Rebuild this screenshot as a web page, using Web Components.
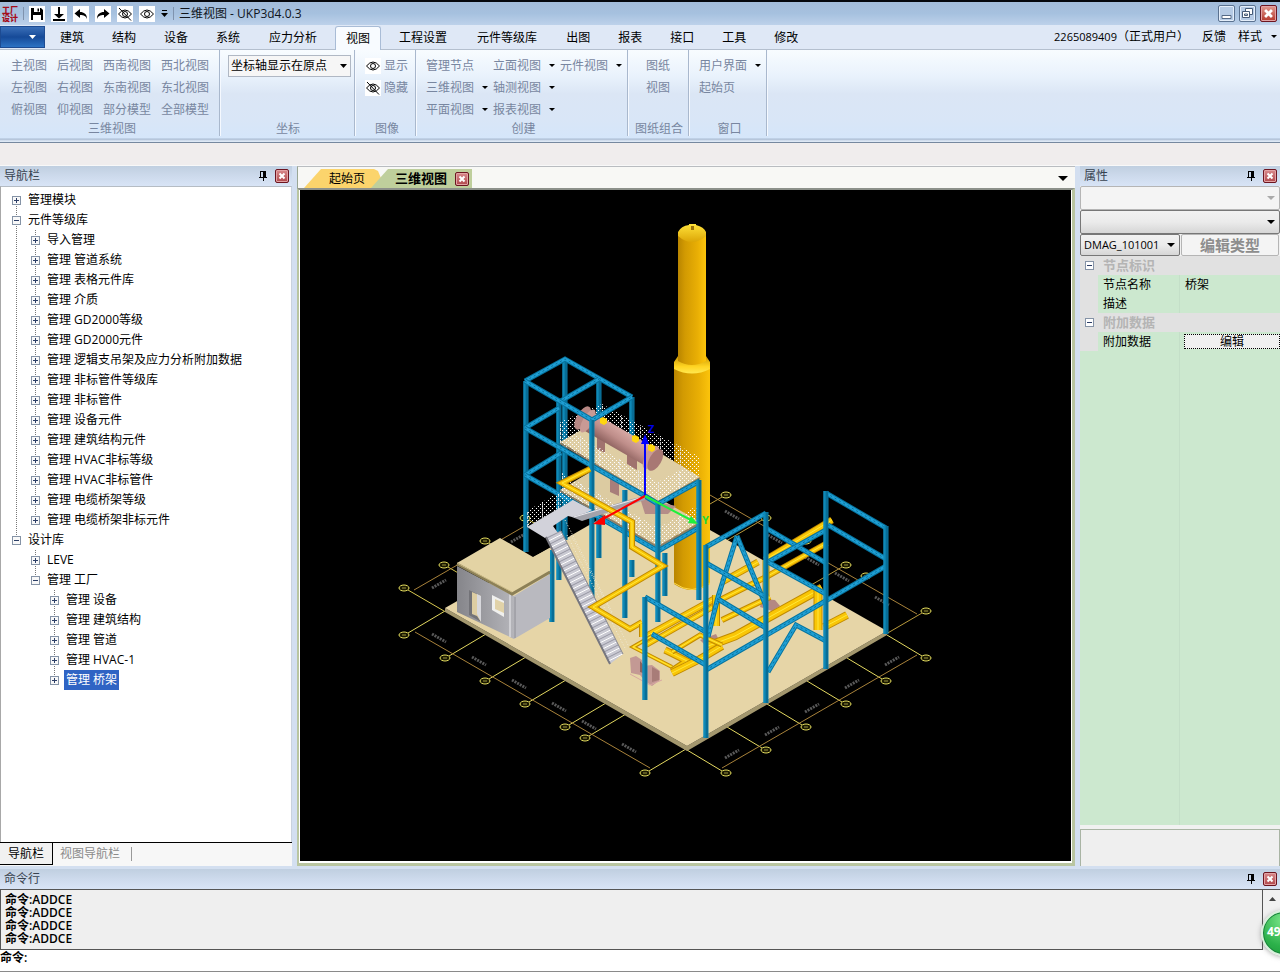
<!DOCTYPE html>
<html lang="zh-CN">
<head>
<meta charset="utf-8">
<title>三维视图 - UKP3d4.0.3</title>
<style>
  body {
    margin: 0;
    font: 12px/20px "Open Sans", "Noto Sans CJK SC", sans-serif;
    color: #000;
    background: #d3dff0;
  }
</style>
</head>
<body>
<plant-app></plant-app>

<script>
const base = `
  * { box-sizing: border-box; }
  button, select, input { font: inherit; color: inherit; margin: 0; padding: 0; border: 0; background: none; border-radius: 0; }
  button { white-space: nowrap; text-align: left; }
  select { appearance: none; }
  svg { display: block; }
`;

const arrow = (color = '#000') =>
  `url('data:image/svg+xml,<svg xmlns="http://www.w3.org/2000/svg" width="8" height="4"><path d="M0 0h8L4 4z" fill="${color.replace('#', '%23')}"/></svg>')`;

const icons = {
  save: '<path d="M2 2h10l2 2v10H2z"/><path d="M5 2h6v4H5zM4 9h8v5H4z" fill="#fff"/><path d="M8.500 2.500h1.500v3H8.500z"/>',
  down: '<path d="M7 1h2v7h4l-5 4.500L3 8h4zM2 13h12v2H2z"/>',
  undo: '<path d="M7 3v3c4 0 7 2 7 7-1-3-3-4-7-4v3L1.500 7.500z"/>',
  redo: '<path d="M9 3v3c-4 0-7 2-7 7 1-3 3-4 7-4v3l5.500-4.500z"/>',
  eye: '<g fill="none" stroke="#000"><path d="M1.500 8Q8 0 14.500 8 8 16 1.500 8z"/><circle cx="8" cy="8" r="2.500"/></g>',
  hide: '<g fill="none" stroke="#000"><path d="M1.500 8Q8 0 14.500 8 8 16 1.500 8z"/><circle cx="8" cy="8" r="2.500"/><path d="M2 2l12 12.500"/></g>',
  pin: '<path d="M5 3h6v6h1v1H9v3H8v-3H4V9h1zM6 4v5h2V4z" fill-rule="evenodd"/>'
};
const icon = name => `<svg width="16" height="16" viewBox="0 0 16 16">${icons[name]}</svg>`;

function define(name, render) {
  customElements.define(name, class extends HTMLElement {
    constructor() {
      super();
      this.root = this.attachShadow({ mode: 'open' });
    }
    connectedCallback() {
      this.root.innerHTML = `<style>${base}</style>` + render(this);
    }
  });
}

define('close-button', () => `
  <style>
    :host { display: block; }
    button {
      display: block; width: 14px; height: 14px; border: 1px solid #6d1520; border-radius: 2px;
      background: linear-gradient(#d98a8c, #b0484c); box-shadow: inset 0 0 0 1px #e3a3a5;
    }
    :host([large]) button { width: 17px; height: 17px; background: linear-gradient(#e29a90, #b5382c); }
    svg { margin: auto; }
    :host([large]) svg { width: 11px; height: 11px; }
  </style>
  <button aria-label="关闭"><svg width="8" height="8" viewBox="0 0 8 8"><path d="M1.500 1.500l5 5m0-5l-5 5" stroke="#fff" stroke-width="2"/></svg></button>
`);

define('title-bar', () => `
  <style>
    :host {
      display: flex; align-items: center; height: 25px; border-top: 2px solid #05070c; padding: 0 3px 0 2px;
      background: linear-gradient(#a3bcda, #a6c1df 50%, #bdd1ea);
    }
    .logo { width: 17px; font-size: 8px; line-height: 8px; font-weight: 800; color: #a50c1a; white-space: pre; }
    .bar { width: 1px; height: 13px; background: #7f93ae; margin: 0 5px 0 4px; }
    .tools { display: flex; gap: 6px; }
    .tools button { width: 16px; height: 16px; background: #fff; }
    .more { width: 7px; margin: 0 5px 0 6px; }
    .more + .bar { margin-left: 0; }
    h1 { flex: 1; margin: 0; font-size: 12px; font-weight: 400; color: #10151c; }
    .win { display: flex; gap: 4px; }
    .win > button {
      width: 17px; height: 17px; border: 1px solid #5b7290; border-radius: 2px;
      box-shadow: inset 0 0 0 1px #e4eefa; background: #b6cbe5;
    }
  </style>
  <span class="logo">工厂
设计</span>
  <span class="bar"></span>
  <div class="tools">
    <button aria-label="保存">${icon('save')}</button>
    <button aria-label="下载">${icon('down')}</button>
    <button aria-label="撤销">${icon('undo')}</button>
    <button aria-label="重做">${icon('redo')}</button>
    <button aria-label="隐藏">${icon('hide')}</button>
    <button aria-label="显示">${icon('eye')}</button>
  </div>
  <button class="more" aria-label="更多"><svg width="7" height="8"><path d="M1 0h5v1H1zM0 3h7L3.500 7z"/></svg></button>
  <span class="bar"></span>
  <h1>三维视图 - UKP3d4.0.3</h1>
  <div class="win">
    <button aria-label="最小化"><svg width="15" height="15"><path d="M3 9.500h9v3H3z" fill="#fff" stroke="#556a86"/></svg></button>
    <button aria-label="还原"><svg width="15" height="15" fill="#fff" stroke="#455a76"><path d="M5.500 2.500h7v6h-7z"/><path d="M2.500 5.500h7v6h-7zM4.500 8h3v1.500h-3z"/></svg></button>
    <close-button large></close-button>
  </div>
`);

const tabs = ['建筑', '结构', '设备', '系统', '应力分析', '视图', '工程设置', '元件等级库', '出图', '报表', '接口', '工具', '修改'];

define('ribbon-tabs', () => `
  <style>
    :host { display: flex; height: 25px; background: #dfe8f6; border-bottom: 1px solid #b4bfce; }
    .file { width: 45px; height: 22px; margin: 1px 1px 0 0; border: 1px solid #1d4b92; background: linear-gradient(#3a6fb8, #164a98 50%, #2d73c4); }
    .file svg { margin: 0 0 0 28px; }
    nav { display: flex; flex: 1; }
    nav button { padding: 0 14px; height: 25px; line-height: 26px; }
    nav .long { padding: 0 15px; }
    nav .on {
      padding: 0 10px; margin: 1px 3px 0; height: 24px; line-height: 24px; background: #f8fbff;
      border: 1px solid #a9bcd6; border-bottom: 0; border-radius: 3px 3px 0 0;
    }
    .user { display: flex; align-items: center; padding: 0 3px 0 0; }
    .user span { margin-right: 7px; }
    .user small { font-size: 11px; }
    .user button { margin-left: 6px; }
    .user .style { display: flex; align-items: center; gap: 9px; margin-left: 12px; }
  </style>
  <button class="file" aria-label="文件"><svg width="7" height="5"><path d="M0 0h7L3.500 4z" fill="#fff"/></svg></button>
  <nav>${tabs.map(t => `<button class="${t === '视图' ? 'on' : t.length > 2 ? 'long' : ''}">${t}</button>`).join('')}</nav>
  <div class="user">
    <span><small>2265089409</small>（正式用户）</span>
    <button>反馈</button>
    <button class="style">样式<svg width="6" height="4"><path d="M0 0h6L3 3z"/></svg></button>
  </div>
`);

define('ribbon-group', el => `
  <style>
    :host { display: flex; flex-direction: column; padding: 5px 8px 0; border-right: 1px solid #a9b8cd; box-shadow: 1px 0 #f5f9ff; margin: 0 0 6px; }
    .body { display: grid; grid-template-rows: repeat(3, 22px); grid-auto-flow: column; justify-content: start; flex: 1; }
    :host([center]) .body { justify-content: center; }
    .name { text-align: center; line-height: 16px; padding-left: 2px; color: #7886a0; }
  </style>
  <div class="body"><slot></slot></div>
  <div class="name">${el.getAttribute('name')}</div>
`);

define('ribbon-item', el => `
  <style>
    :host { display: block; }
    button { display: flex; align-items: center; height: 22px; color: #7886a0; }
    .icon { width: 16px; height: 16px; background: #fff; margin-right: 3px; }
    :host([menu]) button { width: 67px; }
    .caret { margin-left: 8px; }
  </style>
  <button>${el.hasAttribute('icon') ? `<span class="icon">${icon(el.getAttribute('icon'))}</span>` : ''}${el.textContent}${el.hasAttribute('menu') ? '<svg class="caret" width="6" height="4"><path d="M0 0h6L3 3z"/></svg>' : ''}</button>
`);

define('view-ribbon', () => {
  const items = list => list.map(t => `<ribbon-item ${t.endsWith('*') ? 'menu' : ''}>${t.replace('*', '')}</ribbon-item>`).join('');
  return `
  <style>
    :host {
      display: flex; height: 93px; border-bottom: 1px solid #76889f;
      background: linear-gradient(#f8fcff, #e9f2fc 26px, #dbe6f5 44px, #d9e6f7 70px, #d5e6fa 88px, #a9bbd2 89px, #dde8f5 91px);
    }
    .views { width: 220px; padding-left: 11px; }
    .axis { width: 135px; }
    .image { width: 61px; padding-left: 10px; }
    .create { width: 212px; padding-left: 10px; }
    .sheet { width: 61px; padding-left: 0; padding-right: 0; }
    .window { width: 78px; padding-left: 10px; }
    .gap { margin-right: 10px; }
    select {
      width: 123px; height: 22px; padding: 0 2px; border: 1px solid #b0b8c4;
      background: #f6f6f6 ${arrow()} right 3px center / 7px 4px no-repeat;
    }
  </style>
  <ribbon-group class="views" name="三维视图">
    ${['主视图', '左视图', '俯视图', '后视图', '右视图', '仰视图', '西南视图', '东南视图', '部分模型', '西北视图', '东北视图', '全部模型']
      .map(t => `<ribbon-item class="gap">${t}</ribbon-item>`).join('')}
  </ribbon-group>
  <ribbon-group class="axis" name="坐标">
    <select aria-label="坐标轴"><option>坐标轴显示在原点</option></select>
  </ribbon-group>
  <ribbon-group class="image" name="图像">
    <ribbon-item icon="eye">显示</ribbon-item>
    <ribbon-item icon="hide">隐藏</ribbon-item>
  </ribbon-group>
  <ribbon-group class="create" name="创建">
    ${items(['管理节点', '三维视图*', '平面视图*', '立面视图*', '轴测视图*', '报表视图*', '元件视图*'])}
  </ribbon-group>
  <ribbon-group class="sheet" name="图纸组合" center>${items(['图纸', '视图'])}</ribbon-group>
  <ribbon-group class="window" name="窗口">${items(['用户界面*', '起始页'])}</ribbon-group>
`; });

define('tool-panel', el => `
  <style>
    :host { display: flex; flex-direction: column; min-height: 0; min-width: 0; }
    header {
      display: flex; align-items: center; flex: none; height: 20px; padding: 0 3px 0 4px;
      color: #37424f; background: linear-gradient(#c0cfe0, #cddaec 50%, #d8e4f6);
    }
    h2 { flex: 1; margin: 0; font-size: 12px; font-weight: 400; }
    .pin { margin-right: 4px; }
  </style>
  <header><h2>${el.getAttribute('name')}</h2><button class="pin" aria-label="固定">${icon('pin')}</button><close-button></close-button></header>
  <slot></slot>
`);

// level, label, open, guide line per level: 1 runs on, s starts, e ends, 0 none
const nodes = [
  [0, '管理模块', 0, 's'],
  [0, '元件等级库', 1, '1'],
  ...['导入管理', '管理 管道系统', '管理 表格元件库', '管理 介质', '管理 GD2000等级', '管理 GD2000元件',
    '管理 逻辑支吊架及应力分析附加数据', '管理 非标管件等级库', '管理 非标管件', '管理 设备元件', '管理 建筑结构元件',
    '管理 HVAC非标等级', '管理 HVAC非标管件', '管理 电缆桥架等级'].map(t => [1, t, 0, '11']),
  [1, '管理 电缆桥架非标元件', 0, '1e'],
  [0, '设计库', 1, 'e'],
  [1, 'LEVE', 0, '01'],
  [1, '管理 工厂', 1, '0e'],
  [2, '管理 设备', 0, '001'],
  [2, '管理 建筑结构', 0, '001'],
  [2, '管理 管道', 0, '001'],
  [2, '管理 HVAC-1', 0, '001'],
  [2, '管理 桥架', 0, '00e']
];

define('nav-tree', () => `
  <style>
    :host { display: block; flex: 1; overflow: hidden; background: #fff; border-left: 1px solid #a8a8a8; border-right: 1px solid #c9d2dd; padding: 3px 0 0 6px; border-top: 1px solid #b5bcc4; }
    ul { list-style: none; margin: 0; padding: 0; }
    li { display: flex; align-items: center; height: 20px; }
    .g { flex: none; display: flex; align-items: center; justify-content: center; width: 19px; height: 20px; }
    .l1, .ls, .le { background: repeating-linear-gradient(#777 0 1px, transparent 1px 2px) 9px 0 / 1px 100% no-repeat; }
    .ls { background-position: 9px 10px; }
    .le { background-size: 1px 10px; }
    .g button {
      width: 9px; height: 9px; border: 1px solid #8593a6; color: #2c3e66;
      background: linear-gradient(currentColor, currentColor) center / 5px 1px no-repeat, linear-gradient(currentColor, currentColor) center / 1px 5px no-repeat, #f8f8f8;
    }
    .g button.open { background: linear-gradient(currentColor, currentColor) center / 5px 1px no-repeat, #f8f8f8; }
    .label { padding: 0 2px; white-space: nowrap; }
    .sel { background: #2f64c4; color: #fff; }
  </style>
  <ul>${nodes.map(([level, label, open, lines]) => `<li>${[...lines].map((l, i) =>
    `<span class="g l${l}">${i === level ? `<button class="${open ? 'open' : ''}" aria-label="${open ? '折叠' : '展开'}"></button>` : ''}</span>`).join('')
    }<span class="label ${label === '管理 桥架' ? 'sel' : ''}">${label}</span></li>`).join('')}</ul>
`);

define('nav-tabs', () => `
  <style>
    :host { display: flex; flex: none; height: 24px; background: #f7f7f7; border-top: 1px solid #000; }
    button { padding: 0 8px; height: 22px; line-height: 22px; color: #8a8a8a; }
    .on { color: #000; background: #f1f1f1; border: solid #000; border-width: 0 1px 1px 0; }
    .rest { padding: 0 11px 0 7px; }
    i { width: 1px; height: 14px; margin-top: 4px; background: #999; }
  </style>
  <button class="on">导航栏</button><button class="rest">视图导航栏</button><i></i>
`);

/* ---- 3D scene ---- */
const line = (pts, color, w) => `<polyline points="${pts}" fill="none" stroke="${color}" stroke-width="${w}"/>`;
const poly = (pts, color) => `<polygon points="${pts}" fill="${color}"/>`;
const beam = pts => line(pts, '#06749f', 5) + line(pts, '#1f9fd4', 3) + `<polyline points="${pts}" fill="none" stroke="#0b6f98" stroke-dasharray="2 3"/>`;
const col = (x, y1, y2) => line(`${x},${y1} ${x},${y2}`, '#0b7fab', 5) + line(`${x + 1},${y1} ${x + 1},${y2}`, '#065d80', 1) + line(`${x - 2},${y1} ${x - 2},${y2}`, '#1595c6', 1);
const pipe = (pts, w = 6) => line(pts, '#c08a00', w) + line(pts, '#f9c606', w - 2) + line(pts, '#ffe83a', 1);
const bubble = (x, y) => `<g fill="#1a1800" stroke="#e8e060"><ellipse cx="${x}" cy="${y}" rx="5" ry="3"/><path d="M${x - 2} ${y}h4" stroke="#9a9440"/></g>`;
const dim = (x, y, up) => `<path d="M${x - 7} ${y + (up ? 4 : -4)}L${x + 7} ${y + (up ? -4 : 4)}" stroke="#777" stroke-width="3" stroke-dasharray="2 1" opacity=".75"/>`;

function axisGrid() {
  const lowLeft = [[404, 635], [445, 658], [485, 681], [525, 704], [565, 727], [585, 738], [645, 773]];
  const lowRight = [[726, 773], [766, 750], [806, 727], [846, 704], [886, 681], [926, 658]];
  const back = [[726, 495], [766, 518], [806, 541], [846, 565], [866, 576], [926, 611]];
  const left = [[404, 588], [444, 565], [485, 541], [525, 518]];
  let s = '';
  lowLeft.forEach(([x, y]) => s += line(`${x + 4},${y - 2} ${x + 41},${y - 24}`, '#e3d860', 1));
  lowRight.forEach(([x, y]) => s += line(`${x - 4},${y - 2} ${x - 39},${y - 23}`, '#e3d860', 1));
  back.forEach(([x, y]) => s += line(`${x - 4},${y + 2} ${x - 40},${y + 23}`, '#b99a3c', 1));
  left.forEach(([x, y]) => s += line(`${x + 4},${y + 2} ${x + 40},${y + 23}`, '#d8c850', 1));
  s += line('415,632 650,768', '#a8823a', 1) + line('722,768 917,655', '#a8823a', 1);
  s += line('710,495 917,614', '#a8823a', 1) + line('414,590 530,523', '#a8823a', 1);
  [...lowLeft, ...lowRight, ...back, ...left].forEach(p => s += bubble(...p));
  [[439, 638], [479, 661], [519, 684], [559, 707], [589, 725], [629, 748], [732, 515], [775, 539], [812, 561], [842, 577], [882, 601]].forEach(p => s += dim(...p));
  [[439, 584], [518, 538], [732, 754], [772, 731], [812, 708], [852, 684], [892, 661]].forEach(p => s += dim(...p, true));
  return s;
}

function rails(pts, h) {
  const p = pts.map(([x, y]) => `${x},${y}`);
  const q = pts.slice().reverse().map(([x, y]) => `${x},${y - h}`);
  let s = `<polygon points="${p.join(' ')} ${q.join(' ')}" fill="url(#dots)"/>`;
  // posts
  for (let i = 1; i < pts.length; i++) {
    const [x1, y1] = pts[i - 1], [x2, y2] = pts[i];
    const n = Math.round(Math.abs(x2 - x1) / 18);
    for (let k = 0; k < n; k++) {
      const x = Math.round(x1 + (x2 - x1) * k / n), y = Math.round(y1 + (y2 - y1) * k / n);
      s += `<path d="M${x + .5} ${y}v${-h}" stroke="#e8e8e8" stroke-dasharray="3 1" opacity=".8"/>`;
    }
  }
  return s;
}

function steps() {
  let s = poly('546,537 561,531 623,654 610,664', '#c9c9d2');
  for (let i = 0; i < 42; i++) {
    const x = 547 + i * 1.500, y = 538 + i * 3;
    s += line(`${x},${y} ${x + 14},${y - 7}`, i % 2 ? '#fff' : '#9696a2', 1);
  }
  return s + line('546,537 610,664', '#77777f', 2) + line('561,531 623,654', '#88888f', 1)
    + `<g stroke="#efe9d6" fill="none" stroke-dasharray="1 2"><path d="M567 535L626 650M571 535L628 645M565 520L612 612"/></g>`;
}

define('plant-view', () => `
  <style>
    :host { display: block; flex: 1; min-height: 0; overflow: hidden; background: #000; }
    svg { width: 100%; height: 100%; }
    text { font: 700 11px "Open Sans", sans-serif; }
  </style>
  <svg viewBox="300 190 771 671" role="img" aria-label="工厂三维模型">
    <defs>
      <linearGradient id="tower"><stop offset="0" stop-color="#b98500"/><stop offset=".25" stop-color="#d29a02"/><stop offset=".7" stop-color="#e9af05"/><stop offset="1" stop-color="#fcc40b"/></linearGradient>
      <linearGradient id="cap" x2="0" y2="1"><stop offset="0" stop-color="#ffe23a"/><stop offset="1" stop-color="#dca606"/></linearGradient>
      <linearGradient id="collar" x2="0" y2="1"><stop offset="0" stop-color="#c99604"/><stop offset=".6" stop-color="#ffd422"/><stop offset="1" stop-color="#ffe850"/></linearGradient>
      <linearGradient id="vessel" x1=".6" y1="0" x2=".3" y2="1"><stop offset="0" stop-color="#d8aaa5"/><stop offset=".5" stop-color="#bf8e8a"/><stop offset="1" stop-color="#8e625f"/></linearGradient>
      <linearGradient id="wall"><stop offset="0" stop-color="#85858a"/><stop offset="1" stop-color="#b5b5ba"/></linearGradient>
      <pattern id="dots" width="4" height="4" patternUnits="userSpaceOnUse"><path d="M0 0h1v1H0zM2 2h1v1H2z" fill="#fff"/></pattern>
    </defs>
    ${axisGrid()}

    ${poly('445,608 687,746 887,631 887,635 687,751 445,612', '#a3976e')}
    ${poly('445,608 645,493 887,631 687,746', '#e6d5a7')}

    <path d="M674 364h36v220q-18 12-36 0z" fill="url(#tower)"/>
    <path d="M674 583q18 13 36 0" fill="none" stroke="#ffd94a"/>
    <path d="M678 234h28v132h-28z" fill="url(#tower)"/>
    <path d="M678 356l-4 6v7q18 9 36 0v-7l-4-6v5q-14 8-28 0z" fill="url(#collar)"/>
    <path d="M678 236v-4q3-6 11-7v-1h7v1q8 2 10 7v4q-14 12-28 0z" fill="url(#cap)"/>
    <path d="M691 226h3v4h-3z" fill="#9b7208"/>

    ${col(526, 381, 552)}${col(565, 359, 540)}${col(599, 378, 558)}${col(632, 397, 480)}${col(559, 402, 580)}
    ${beam('525,381 565,359 632,397')}${beam('559,402 599,379')}
    ${beam('525,428 559,408')}${beam('525,475 561,453')}

    ${rails([[560, 443], [602, 425], [640, 446], [700, 478]], 21)}
    ${poly('560,490 602,465 700,522 658,546', '#dccba1')}
    ${poly('610,470 619,476 619,496 610,492', '#a87e7a')}
    ${poly('640,498 676,506 668,514 645,514', '#b58d88')}
    ${poly('560,442 602,418 700,477 658,502', '#dfcea4')}
    ${line('560,443 658,502 700,478', '#8f7e66', 2)}${line('560,491 658,547 700,523', '#8f7e66', 2)}
    ${beam('560,495 658,551 700,527')}

    ${poly('597,430 605,434 605,453 597,449', '#a0726e')}${poly('627,448 637,452 637,470 627,464', '#a0726e')}
    <g transform="rotate(30 619 439)">
      <rect x="577" y="429" width="82" height="20" fill="url(#vessel)"/>
      <ellipse cx="577" cy="439" rx="6" ry="13" fill="#b78783"/><ellipse cx="583" cy="439" rx="5" ry="13" fill="#c99a95"/>
      <ellipse cx="656" cy="439" rx="6" ry="13" fill="#c99a95"/><ellipse cx="661" cy="439" rx="6" ry="12" fill="#a87874"/>
    </g>
    ${[[603, 420], [635, 438], [651, 447]].map(([x, y]) => `<path d="M${x - 3} ${y - 2}l3-1 4 2v4l-3 2-4-2z" fill="#ffd60f"/>`).join('')}
    ${rails([[560, 443], [658, 500], [700, 477]], 18)}${rails([[562, 491], [658, 546], [700, 522]], 18)}

    ${beam('525,381 592,420 632,397')}${beam('525,428 645,496 658,504 700,481')}${beam('525,475 578,505')}
    ${col(592, 420, 622)}${col(552, 550, 622)}${col(625, 490, 618)}${col(632, 560, 577)}${col(658, 503, 622)}${col(665, 553, 596)}${col(699, 480, 600)}

    ${poly('527,527 573,500 592,510 576,518 568,516 553,526 558,533 545,538', '#d2d2da')}
    ${rails([[527, 527], [573, 500]], 16)}
    ${poly('572,517 632,499 645,496 645,500 582,521', '#a3a3ab')}${line('574,517 640,498', '#e9e9ee', 1)}
    ${steps()}

    ${pipe('590,469 562,483 632,522 632,547 663,566 593,607 630,629 642,622')}

    ${poly('457,566 514,596 514,639 457,612', 'url(#wall)')}${poly('514,596 550,574 550,618 514,639', '#b9b9bf')}
    ${line('510,594 510,637', '#d0d0d4', 2)}${line('515,597 515,638', '#8e8e94', 1)}
    ${poly('469,590 481,596 481,622 469,615', '#737378')}${poly('472,592 481,596 481,622 477,616 472,614', '#ddcda2')}${poly('477,594 481,596 481,622 477,614', '#d8d8dc')}
    ${poly('492,595 504,601 504,617 492,610', '#f0f0ee')}${poly('495,599 504,603 504,613 495,609', '#e1d2a8')}
    ${poly('457,563 500,538 533,557 550,548 550,571 512,593', '#e3d3a4')}${line('457,564 512,594 550,572', '#8c8057', 3)}${line('457,563 512,592', '#c8b884', 1)}

    ${poly('630,658 636,656 642,660 643,666 652,665 660,671 660,680 652,686 645,681 640,675 631,673', '#c39994')}
    ${poly('640,661 646,668 646,674 640,672', '#8b625e')}${poly('652,667 659,671 659,680 652,682', '#a87c78')}
    ${line('630,674 650,685 662,680', '#d8a8a2', 1)}
    ${poly('762,599 775,600 780,606 772,611 760,607', '#b48883')}${poly('700,640 716,634 720,642 708,648', '#b48883')}

    ${pipe('722,582 758,562', 7)}${pipe('718,601 766,577 827,543', 6)}${pipe('765,560 832,520', 7)}${pipe('766,560 766,600', 7)}
    ${pipe('722,620 770,597', 6)}${pipe('708,646 735,636 822,588', 9)}${pipe('818,590 818,630', 9)}${pipe('824,627 847,615', 8)}
    ${pipe('645,637 716,598', 7)}${pipe('646,645 718,604', 6)}${pipe('716,595 716,626', 8)}${pipe('642,624 642,637', 6)}
    ${pipe('652,636 633,647 672,667', 4)}${pipe('665,650 687,661 672,671', 7)}${pipe('672,673 700,659 722,646', 8)}${pipe('672,652 700,635 722,645', 5)}

    ${beam('706,547 766,513')}${beam('737,536 718,597 708,637')}${beam('737,536 766,606')}
    ${beam('706,563 766,597')}${beam('766,528 826,563')}${beam('826,493 886,528')}${beam('828,525 886,559')}
    ${beam('768,562 826,530')}${beam('768,562 826,594')}${beam('718,599 766,628')}
    ${beam('768,672 796,625 826,641')}${beam('706,670 886,566')}
    ${beam('645,597 706,632')}${beam('652,634 706,665')}
    ${col(645, 597, 700)}${col(706, 545, 738)}${col(766, 512, 703)}${col(826, 491, 669)}${col(886, 526, 634)}

    <g stroke-width="2">
      <path d="M645 496V441" stroke="#00f"/><path d="M641 444l4-10 4 10z" fill="#00f"/>
      <path d="M645 496l-44 24" stroke="#f00"/><path d="M605 515l-12 9 12 1z" fill="#f00"/>
      <path d="M645 496l46 24" stroke="#1ef03c"/><path d="M691 516l7 8-10-1z" fill="#1ef03c"/>
    </g>
    <text x="648" y="433" fill="#0000e8">Z</text>
    <text x="702" y="524" fill="#1ed838">Y</text>
  </svg>
`);

define('document-area', () => `
  <style>
    :host { display: flex; flex-direction: column; min-width: 0; min-height: 0; }
    .tabs { display: flex; align-items: end; flex: none; height: 22px; padding-left: 6px; background: #f8f8f5; border-left: 1px solid #9aa694; border-top: 1px solid #b9bcc0; }
    .tabs button { height: 19px; line-height: 15px; }
    .start { width: 81px; padding-left: 25px; background: #fbd46c; clip-path: polygon(17px 0, 70px 0, 74px 2px, 100% 100%, 0 100%); }
    .view {
      display: flex; align-items: center; height: 19px; width: 101px; margin-left: -14px; padding-left: 24px; gap: 8px; font-size: 13px; font-weight: 700;
      background: #bfcf9c; clip-path: polygon(17px 0, 100% 0, 100% 100%, 0 100%);
    }
    .list { margin: 0 7px 0 auto; }
    .frame { display: flex; flex: 1; min-height: 0; border: 2px solid #b9c5a0; border-width: 2px 3px 3px 2px; border-top-color: #8d918a; background: #fff; padding: 0 1px 2px 1px; }
  </style>
  <div class="tabs">
    <button class="start">起始页</button>
    <div class="view"><button>三维视图</button><close-button></close-button></div>
    <button class="list" aria-label="窗口列表"><svg width="10" height="6"><path d="M0 0h10L5 5z"/></svg></button>
  </div>
  <div class="frame"><plant-view></plant-view></div>
`);

define('property-list', () => `
  <style>
    :host { display: flex; flex-direction: column; flex: 1; min-height: 0; background: #f1f1f1; }
    select {
      flex: none; height: 24px; padding: 0 3px; border: 1px solid #777; border-radius: 2px;
      background: ${arrow()} right 4px center / 8px 4px no-repeat, linear-gradient(#f2f2f2, #ebebeb 50%, #d6d6d6);
    }
    select:disabled { opacity: 1; border-color: #b5b5b5; background: #f4f4f4 ${arrow('#aaa')} right 4px center / 8px 4px no-repeat; }
    .type { display: flex; gap: 1px; height: 22px; }
    .type select { width: 100px; height: 22px; font-size: 11px; }
    .type button { flex: 1; text-align: center; font-size: 15px; font-weight: 700; line-height: 18px; color: #8d8d8d; background: #f4f4f4; border: 1px solid #b5b5b5; border-radius: 2px; margin-right: 1px; }
    .grid { flex: 1; background: linear-gradient(90deg, #cce8cf 99px, #c4dfc8 99px 100px, #cce8cf 100px); overflow: hidden; }
    table { width: 100%; border-collapse: collapse; table-layout: fixed; }
    .gutter { width: 18px; }
    .key { width: 82px; }
    td, th { height: 19px; padding: 0 0 0 5px; line-height: 19px; font-weight: 400; text-align: left; white-space: nowrap; }
    td:first-child { background: #e1e1e1; }
    .cat th { background: #e1e1e1; color: #b4b4b4; font-size: 13px; font-weight: 700; }
    .cat button { display: block; width: 9px; height: 9px; border: 1px solid #8593a6; background: linear-gradient(#2c3e66, #2c3e66) center / 5px 1px no-repeat, #fff; }
    td.edit { padding: 0 0 0 4px; }
    .edit button { display: block; width: 100%; height: 15px; line-height: 13px; text-align: center; background: #f0f0f0; border: 1px dotted #000; }
    .help { flex: none; height: 37px; margin-top: 4px; border: 1px solid #a9b4a4; border-bottom: 0; background: #efefef; }
  </style>
  <select disabled aria-label="类别"></select>
  <select aria-label="元素"></select>
  <div class="type">
    <select aria-label="类型"><option>DMAG_101001</option></select>
    <button>编辑类型</button>
  </div>
  <div class="grid">
    <table>
      <colgroup><col class="gutter"><col class="key"><col></colgroup>
      <tr class="cat"><td><button aria-label="折叠"></button></td><th colspan="2">节点标识</th></tr>
      <tr><td></td><th>节点名称</th><td>桥架</td></tr>
      <tr><td></td><th>描述</th><td></td></tr>
      <tr class="cat"><td><button aria-label="折叠"></button></td><th colspan="2">附加数据</th></tr>
      <tr><td></td><th>附加数据</th><td class="edit"><button>编辑</button></td></tr>
    </table>
  </div>
  <div class="help"></div>
`);

define('command-log', () => `
  <style>
    :host { display: block; font-weight: 600; background: #fff; }
    .row { display: flex; }
    .log { flex: 1; height: 61px; margin: 0; padding: 3px 4px; background: #efefef; border: 1px solid #555; font: inherit; line-height: 13px; }
    .scroll { width: 17px; background: #f1f1f1; border-top: 1px solid #555; padding: 7px 6px; }
    form { display: flex; height: 22px; margin: 0; border-bottom: 1px solid #8a8a8a; }
    label { line-height: 16px; }
    input { flex: 1; height: 18px; outline: 0; }
  </style>
  <div class="row">
    <pre class="log">${Array(4).fill('命令:ADDCE').join('\n')}</pre>
    <div class="scroll"><svg width="7" height="4"><path d="M3.500 0L7 4H0z" fill="#444"/></svg></div>
  </div>
  <form><label for="cmd">命令:</label><input id="cmd" autocomplete="off"></form>
`);

define('speed-ball', () => `
  <style>
    :host {
      position: absolute; right: -27px; bottom: 16px; width: 46px; height: 46px; border-radius: 50%; padding-left: 4px;
      border: 2px solid #d9efdc; background: radial-gradient(circle at 50% 20%, #7be68a, #2cb14a 65%, #1c9a3a); box-shadow: 0 1px 5px #6668, inset 0 0 0 1px #17803a;
      box-sizing: border-box; color: #fff; font-weight: 700; line-height: 40px;
    }
  </style>49%
`);

define('plant-app', () => `
  <style>
    :host { position: relative; display: flex; flex-direction: column; height: 100vh; overflow: hidden; }
    .strip { flex: none; height: 23px; background: #f0eded; border-bottom: 1px solid #f8f8f8; }
    main { flex: 1; min-height: 0; display: grid; grid-template-columns: 292px minmax(0, 1fr) 200px; grid-template-rows: minmax(0, 1fr); gap: 5px; padding-bottom: 3px; }
    title-bar, ribbon-tabs, view-ribbon, .bottom { flex: none; }
  </style>
  <title-bar></title-bar>
  <ribbon-tabs></ribbon-tabs>
  <view-ribbon></view-ribbon>
  <div class="strip"></div>
  <main>
    <tool-panel name="导航栏"><nav-tree></nav-tree><nav-tabs></nav-tabs></tool-panel>
    <document-area></document-area>
    <tool-panel name="属性"><property-list></property-list></tool-panel>
  </main>
  <tool-panel class="bottom" name="命令行"><command-log></command-log></tool-panel>
  <speed-ball></speed-ball>
`);
</script>
</body>
</html>
